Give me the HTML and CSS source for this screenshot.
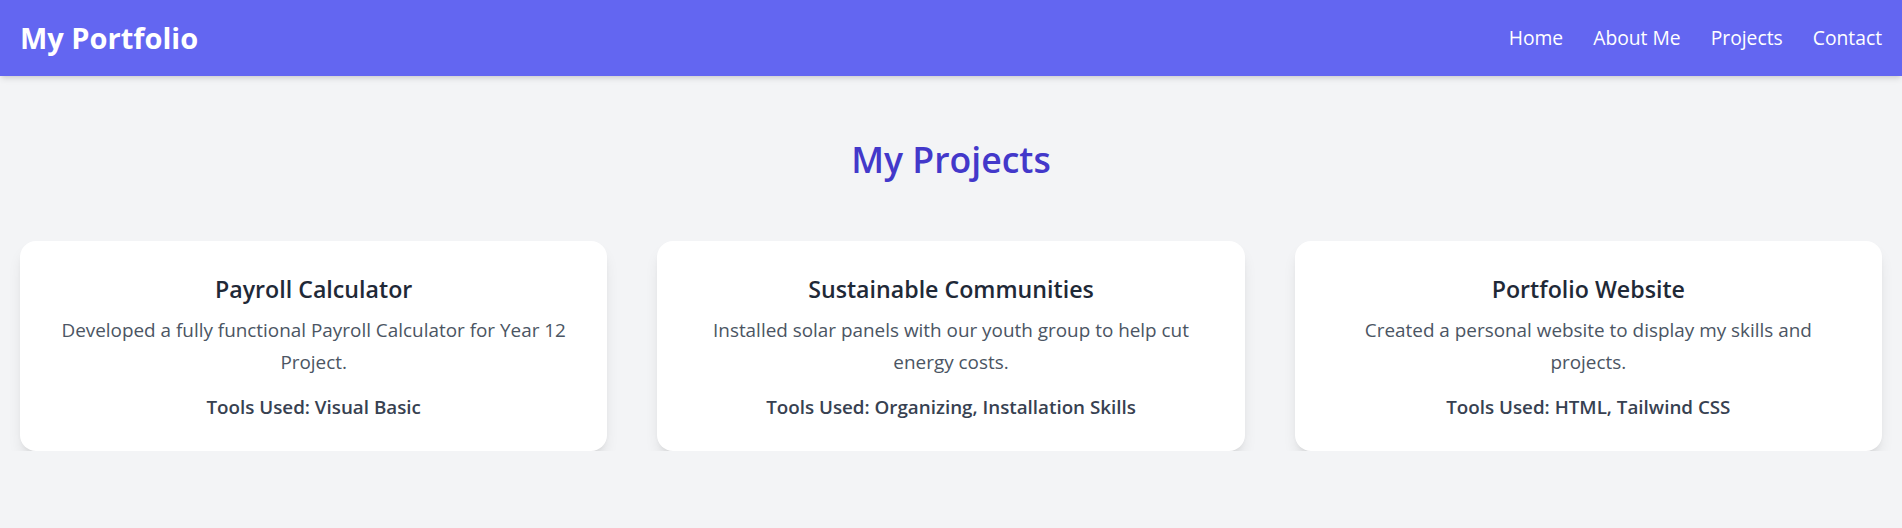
FILE: index.html
```html
<!DOCTYPE html>
<html lang="en">
<head>
<meta charset="utf-8">
<title>My Portfolio</title>
<link rel="stylesheet" href="styles.css">
</head>
<body>
<header class="site-header">
  <div class="logo">My Portfolio</div>
  <nav class="nav">
    <a href="#" class="nav-link">Home</a>
    <a href="#" class="nav-link">About Me</a>
    <a href="#" class="nav-link">Projects</a>
    <a href="#" class="nav-link">Contact</a>
  </nav>
</header>
<main class="main">
  <h2 class="section-title">My Projects</h2>
  <div class="cards">
    <div class="card">
      <h3 class="card-title">Payroll Calculator</h3>
      <p class="card-desc">Developed a fully functional Payroll Calculator for Year 12 Project.</p>
      <p class="card-tools">Tools Used: Visual Basic</p>
    </div>
    <div class="card">
      <h3 class="card-title">Sustainable Communities</h3>
      <p class="card-desc">Installed solar panels with our youth group to help cut energy costs.</p>
      <p class="card-tools">Tools Used: Organizing, Installation Skills</p>
    </div>
    <div class="card">
      <h3 class="card-title">Portfolio Website</h3>
      <p class="card-desc">Created a personal website to display my skills and projects.</p>
      <p class="card-tools">Tools Used: HTML, Tailwind CSS</p>
    </div>
  </div>
</main>
</body>
</html>
```
FILE: styles.css
```css
* { box-sizing: border-box; }
html, body { margin: 0; padding: 0; }
body {
  background: #f3f4f6;
  font-family: "Open Sans", "Noto Sans", sans-serif;
  color: #1f2937;
}
.site-header {
  height: 76px;
  background: #6366f1;
  display: flex;
  align-items: center;
  justify-content: space-between;
  padding: 0 20px;
  box-shadow: 0 4px 6px -1px rgba(0,0,0,0.1), 0 2px 4px -2px rgba(0,0,0,0.1);
  position: relative;
}
.logo {
  color: #fff;
  font-size: 29px;
  line-height: 36px;
  font-weight: 700;
}
.nav {
  display: flex;
  gap: 30px;
}
.nav-link {
  color: #fff;
  text-decoration: none;
  font-size: 19.3px;
  line-height: 28px;
}
.main {
  padding: 0 20px;
}
.section-title {
  margin: 63px 0 62px;
  text-align: center;
  color: #4338ca;
  font-size: 35.6px;
  line-height: 40px;
  font-weight: 600;
}
.cards {
  display: grid;
  grid-template-columns: repeat(3, 1fr);
  gap: 50px;
}
.card {
  background: #fff;
  border-radius: 16px;
  box-shadow: 0 10px 15px -3px rgba(0,0,0,0.1), 0 4px 6px -4px rgba(0,0,0,0.1);
  padding: 32px 40px 31px;
  text-align: center;
  height: 210px;
}
.card-title {
  margin: 0;
  font-size: 23.2px;
  line-height: 32px;
  font-weight: 600;
  color: #1f2937;
}
.card-desc {
  margin: 9px 0 0;
  font-size: 18.9px;
  line-height: 32px;
  color: #4b5563;
}
.card-tools {
  margin: 15px 0 0;
  font-size: 18.8px;
  line-height: 28px;
  font-weight: 600;
  color: #374151;
}
```
